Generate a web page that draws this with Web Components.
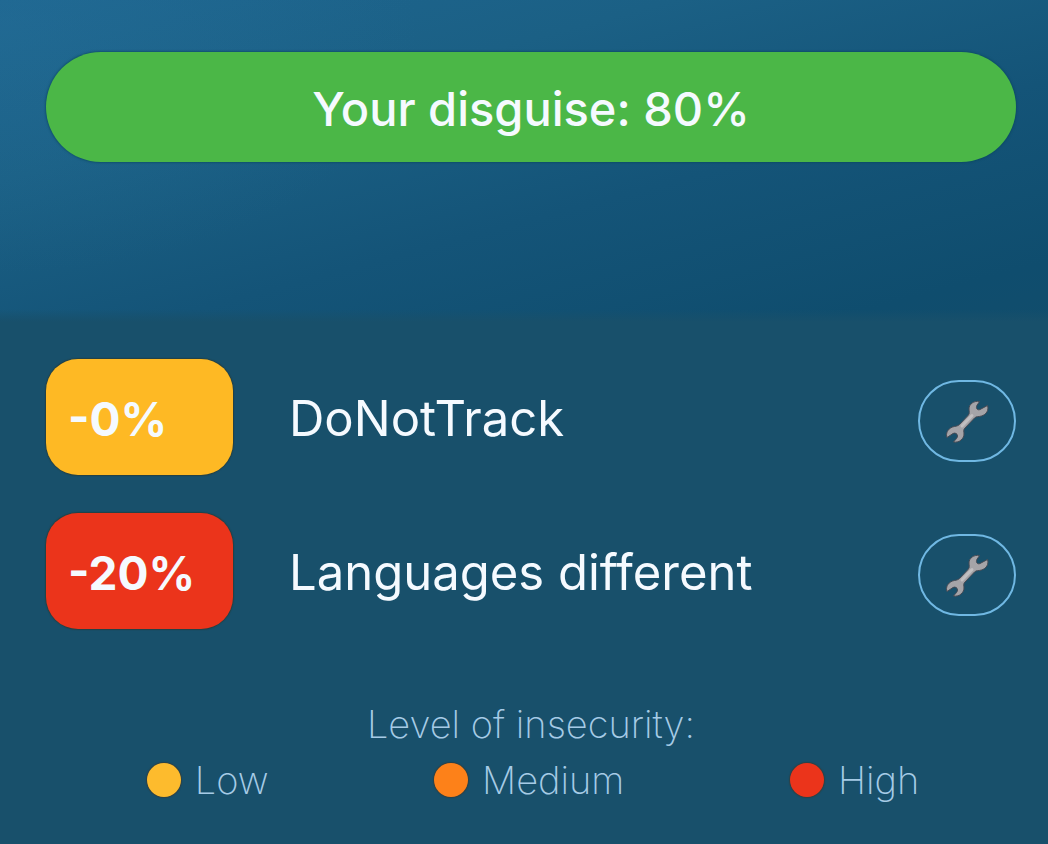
<!DOCTYPE html>
<html lang="en">
<head>
<meta charset="utf-8">
<meta name="viewport" content="width=device-width, initial-scale=1">
<title>Your disguise</title>
<style>
  html, body { margin: 0; min-height: 100%; background: #18506b; }
  body { font-family: Inter, "Open Sans", sans-serif; color: #f5faff; }
</style>
</head>
<body>
<privacy-panel></privacy-panel>

<template id="privacy-panel">
  <style>
    :host { display: flex; flex-direction: column; min-height: 100vh; background: #18506b; }
    header {
      padding: 52px 32px 160px 46px;
      background:
        linear-gradient(to bottom, transparent 96%, #18506b),
        radial-gradient(ellipse 40% 75% at 0% 10%, rgba(38, 112, 154, .35), transparent),
        linear-gradient(165deg, #1e6690 0%, #1b6085 30%, #145478 60%, #0f4d6e 90%, #114d6c 100%);
    }
    main { display: flex; flex-direction: column; gap: 38px; padding: 37px 32px 0 46px; }
    footer { padding: 72px 32px 32px 46px; color: #a6cbe6; font-size: 38px; line-height: 46px; font-weight: 200; }
    h2 { margin: 0 0 10px; font: inherit; text-align: center; }
    ul { display: flex; justify-content: space-around; margin: 0; padding: 0 14px 0 18px; list-style: none; }
  </style>
  <header><disguise-score>Your disguise: 80%</disguise-score></header>
  <main>
    <issue-row level="low" score="-0%">DoNotTrack</issue-row>
    <issue-row level="high" score="-20%">Languages different</issue-row>
  </main>
  <footer>
    <h2>Level of insecurity:</h2>
    <ul>
      <li><legend-item level="low">Low</legend-item></li>
      <li><legend-item level="medium">Medium</legend-item></li>
      <li><legend-item level="high">High</legend-item></li>
    </ul>
  </footer>
</template>

<template id="disguise-score">
  <style>
    :host { display: block; }
    h1 {
      margin: 0; height: 110px; border-radius: 55px; background: #4bb747;
      box-shadow: 0 0 2px 1px rgba(8, 70, 92, .6);
      font-size: 47px; line-height: 114px; font-weight: 500; text-align: center;
    }
  </style>
  <h1><slot></slot></h1>
</template>

<template id="issue-row">
  <style>
    :host { display: flex; align-items: center; --level: #feb924; }
    :host([level="high"]) { --level: #eb341b; }
    .score {
      box-sizing: border-box; width: 187px; height: 116px; margin-right: 56px; padding-left: 22px;
      border-radius: 32px; background: var(--level);
      box-shadow: 0 0 1px 1px rgba(50, 50, 30, .5);
      font-size: 46px; line-height: 120px; font-weight: 700;
    }
    .name { flex: 1; padding-top: 4px; font-size: 49px; line-height: 60px; font-weight: 400; }
    button {
      display: grid; place-items: center; box-sizing: border-box; width: 98px; height: 82px;
      margin-top: 8px; padding: 0; border: 2px solid #70b8e3; border-radius: 41px; background: none;
    }
    svg { display: block; }
  </style>
  <span class="score"></span>
  <span class="name"><slot></slot></span>
  <button type="button" aria-label="Fix">
    <svg width="44" height="44" viewBox="0 0 44 44" aria-hidden="true">
      <path fill="#a5a4a8" stroke="#474b55" stroke-width="1" stroke-linejoin="round"
        d="M34.500 2.500C29 1.500 24 5 24 10C24 12.500 25 14.500 23 16.500L14.500 25.500C12.500 27.500 10 27 7.500 28C2.500 30 .5 34.500 2 38.500L8 34.500C10 33.500 12.500 34.500 12.500 37C12.500 39 11 40 8.500 43C14.500 44 19 39.500 19 35C19 32.500 18 31 20 29L29.500 19C31.500 17 33.500 18 36.500 17C41.500 15.500 44 11 42.500 6.500L35 10.500C33 11.500 31 10 31.500 7.500C32 5.500 33.500 4.500 34.500 2.500Z"/>
      <path fill="none" stroke="#c1bfc1" stroke-width="3" stroke-linecap="round" d="M17 27L27 16.500"/>
    </svg>
  </button>
</template>

<template id="legend-item">
  <style>
    :host { display: flex; align-items: center; gap: 14px; --level: #fdbb2d; }
    :host([level="medium"]) { --level: #fd8119; }
    :host([level="high"]) { --level: #eb341b; }
    i { width: 34px; height: 34px; border-radius: 50%; background: var(--level); box-shadow: 0 0 1px 1px rgba(70, 50, 30, .5); }
  </style>
  <i></i><span><slot></slot></span>
</template>

<script>
  class TemplateElement extends HTMLElement {
    constructor() {
      super();
      const template = document.getElementById(this.localName);
      this.attachShadow({ mode: "open" }).append(template.content.cloneNode(true));
    }
  }
  customElements.define("disguise-score", class extends TemplateElement {});
  customElements.define("legend-item", class extends TemplateElement {});
  customElements.define("issue-row", class extends TemplateElement {
    connectedCallback() {
      this.shadowRoot.querySelector(".score").textContent = this.getAttribute("score");
    }
  });
  customElements.define("privacy-panel", class extends TemplateElement {});
</script>
</body>
</html>
